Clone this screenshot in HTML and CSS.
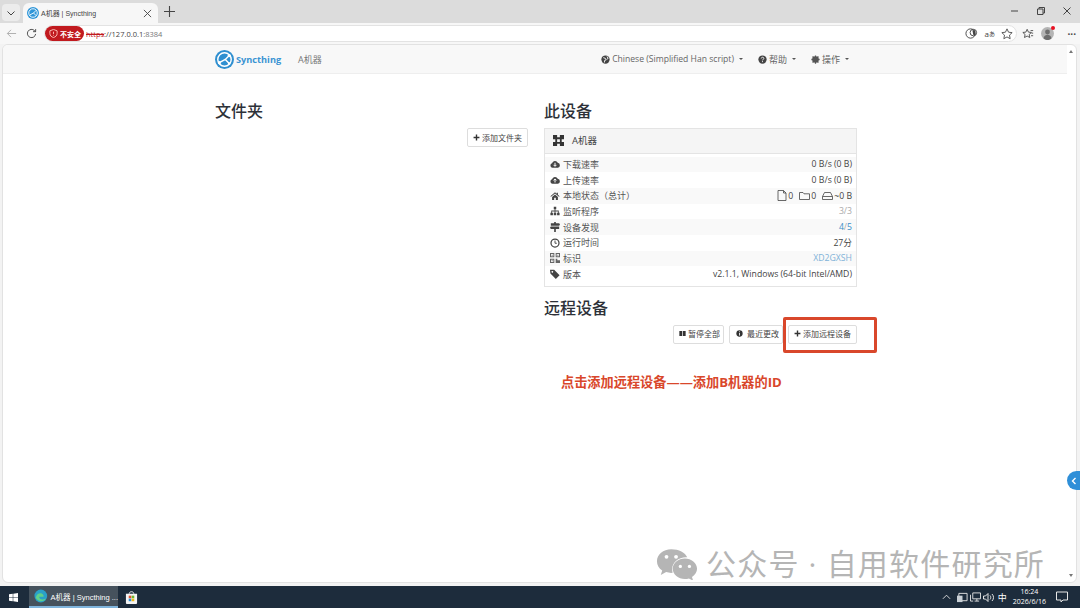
FILE: index.html
```html
<!DOCTYPE html>
<html lang="zh-CN">

<head>
  <meta charset="utf-8">
  <title>A机器 | Syncthing</title>
  <link rel="stylesheet" href="styles.css">
</head>

<body>
  <div class="window">
    <div class="tabstrip">
      <div class="tab-menu">
        <svg width="10" height="10" viewBox="0 0 10 10"><path d="M1.5 3.5 5 7l3.5-3.5" class="line" /></svg>
      </div>
      <div class="tab">
        <svg class="tab-logo" width="12" height="12" viewBox="0 0 24 24">
          <circle cx="12" cy="12" r="12" fill="#2f96d8" />
          <circle cx="12" cy="12" r="8.500" class="logo-line" />
          <path d="M5.500 16 13 12l5-5M13 12l5 5" class="logo-line" />
        </svg>
        <span class="tab-title">A机器 | Syncthing</span>
        <svg width="9" height="9" viewBox="0 0 10 10"><path d="M1 1l8 8M9 1 1 9" class="line" /></svg>
      </div>
      <svg class="new-tab" width="11" height="11" viewBox="0 0 10 10"><path d="M5 0v10M0 5h10" class="line" /></svg>
      <div class="win-controls">
        <svg width="10" height="10" viewBox="0 0 10 10"><path d="M1 5h7" class="line" /></svg>
        <svg width="10" height="10" viewBox="0 0 10 10"><path d="M1.5 3h5.500v5.500h-5.500zM3 3V1.500h5.500V7H7" class="line" /></svg>
        <svg width="10" height="10" viewBox="0 0 10 10"><path d="M1.5 1.500l7 7M8.500 1.500l-7 7" class="line" /></svg>
      </div>
    </div>

    <div class="toolbar">
      <svg width="11" height="11" viewBox="0 0 12 12"><path d="M11 6H1.500M5.500 2 1.500 6l4 4" class="line faint" /></svg>
      <svg class="reload" width="11" height="11" viewBox="0 0 12 12"><path d="M10.500 6.500a4.500 4.500 0 1 1-1.300-3.700L10.500 4V1.200M10.500 4H7.700" class="line" /></svg>
      <div class="addressbar">
        <span class="not-secure">
          <svg width="9" height="9" viewBox="0 0 10 10"><path d="M5 .5 9 2v3c0 2.200-1.700 3.800-4 4.500C2.700 8.800 1 7.200 1 5V2zM5 3v2.500M5 6.500v.8" class="shield" /></svg>
          不安全
        </span>
        <span class="scheme">https</span><span class="host-mid">://127.0.0.1</span><span class="port">:8384</span>
        <div class="address-icons">
          <svg width="13" height="13" viewBox="0 0 14 14"><circle cx="6" cy="7" r="5" class="line" /><circle cx="9" cy="6" r="3.500" class="line" /><path d="M8 3.500h3v5H9z" fill="#444" /></svg>
          <span class="translate">a<small>あ</small></span>
          <svg width="12" height="12" viewBox="0 0 14 14"><path d="M7 1l1.800 3.900 4.200.5-3.100 2.900.8 4.200L7 10.400 3.300 12.500l.8-4.200L1 5.400l4.200-.5z" class="line" /></svg>
        </div>
      </div>
      <svg class="favs" width="12" height="12" viewBox="0 0 14 14"><path d="M6 1.500l1.500 3.300 3.500.4-2.600 2.400.7 3.500L6 9.400l-3.100 1.700.7-3.500L1 5.200l3.500-.4zM10 3h3M11 6h2M10.500 9H13" class="line" /></svg>
      <div class="avatar">
        <svg width="13" height="13" viewBox="0 0 13 13"><circle cx="6.500" cy="6.500" r="6.500" fill="#b4b4b4" /><circle cx="6.500" cy="5" r="2.400" fill="#6d6d6d" /><path d="M2.500 11.500c.5-5 7.500-5 8 0a6.500 6.500 0 0 1-8 0z" fill="#6d6d6d" /></svg>
        <span class="avatar-dot"></span>
      </div>
      <div class="more">···</div>
    </div>

    <div class="viewport">
      <div class="page">
        <nav class="navbar">
          <div class="container nav-row">
            <svg class="brand-logo" width="19" height="19" viewBox="0 0 24 24">
              <circle cx="12" cy="12" r="12" fill="#2f8fd0" />
              <circle cx="12" cy="12" r="8.500" class="logo-line" />
              <path d="M5.500 16 13 12l5-5M13 12l5 5" class="logo-line" />
              <circle cx="5.500" cy="16" r="2" fill="#fff" /><circle cx="18" cy="7" r="2" fill="#fff" /><circle cx="18" cy="17" r="1.600" fill="#fff" />
            </svg>
            <span class="brand-name">Syncthing</span>
            <span class="device-name">A机器</span>
            <div class="nav-right">
              <span class="nav-item lang">
                <svg class="fa" viewBox="0 0 12 12"><circle cx="6" cy="6" r="5.500" /><path d="M3 3.500l3 1 1 2-2 .5-.5 3M8 2l1.500 2.500L8 5.500" class="cut" /></svg>
                Chinese (Simplified Han script)<i class="caret"></i>
              </span>
              <span class="nav-item">
                <svg class="fa" viewBox="0 0 12 12"><circle cx="6" cy="6" r="5.500" /><path d="M4.300 4.700c0-2.200 3.500-2.200 3.500-.2 0 1.300-1.800 1.300-1.800 2.700M6 8.200v1.300" class="cut" /></svg>
                帮助<i class="caret"></i>
              </span>
              <span class="nav-item">
                <svg class="fa" viewBox="0 0 12 12"><circle cx="6" cy="6" r="3.200" fill="none" stroke="#555" stroke-width="2.400" /><path d="M6 .5v11M.5 6h11M2.100 2.100l7.800 7.800M9.900 2.100l-7.800 7.800" stroke="#555" stroke-width="1.700" /></svg>
                操作<i class="caret"></i>
              </span>
            </div>
          </div>
        </nav>

        <main class="container columns">
          <section class="col">
            <h1>文件夹</h1>
            <div class="btn-row">
              <span class="btn">
                <svg class="fa-sm" viewBox="0 0 10 10"><path d="M4 .8h2V4h3.200v2H6v3.200H4V6H.8V4H4z" /></svg>
                添加文件夹
              </span>
            </div>
          </section>

          <section class="col">
            <h1>此设备</h1>
            <div class="panel">
              <div class="panel-head">
                <svg width="11" height="11" viewBox="0 0 12 12"><path d="M0 0h4.500v2.500h3V0H12v4.500H9.500v3H12V12H7.500V9.500h-3V12H0V7.500h2.500v-3H0zM4.500 4.500v3h3v-3z" fill="#333" fill-rule="evenodd" /></svg>
                <span>A机器</span>
              </div>
              <div class="panel-body">
                <div class="row">
                  <span class="row-label"><svg class="fa" viewBox="0 0 12 12"><path d="M3 10.500a2.700 2.700 0 0 1-.5-5.300A3.600 3.600 0 0 1 9.300 4.600 3 3 0 0 1 9.500 10.500z" /><path d="M6 4.500v4M4.200 7 6 8.800 7.800 7" class="cut" /></svg>下载速率</span>
                  <span>0 B/s (0 B)</span>
                </div>
                <div class="row">
                  <span class="row-label"><svg class="fa" viewBox="0 0 12 12"><path d="M3 10.500a2.700 2.700 0 0 1-.5-5.300A3.600 3.600 0 0 1 9.300 4.600 3 3 0 0 1 9.500 10.500z" /><path d="M6 9V5M4.200 6.500 6 4.700l1.800 1.800" class="cut" /></svg>上传速率</span>
                  <span>0 B/s (0 B)</span>
                </div>
                <div class="row">
                  <span class="row-label"><svg class="fa" viewBox="0 0 12 12"><path d="M6 1.500.5 6.300l.7.700L6 3l4.800 4 .7-.7L9.500 4.600V2H8v1.300zM2.500 7.200 6 4.200l3.500 3v3.500H7V8H5v2.700H2.500z" /></svg>本地状态（总计）</span>
                  <span class="totals">
                    <svg class="outline" width="10" height="11" viewBox="0 0 10 11"><path d="M1 .5h5.500L9 3v7.500H1zM6.500.5V3H9" /></svg>0
                    <svg class="outline gap" width="11" height="10" viewBox="0 0 11 10"><path d="M.5 8.500v-7h3.500l1 1.300h5.500v5.700z" /></svg>0
                    <svg class="outline gap" width="11" height="10" viewBox="0 0 11 10"><path d="M2.500 1.500h6l2 4v3H.5v-3zM.5 5.500h10" /></svg>~0 B
                  </span>
                </div>
                <div class="row">
                  <span class="row-label"><svg class="fa" viewBox="0 0 12 12"><path d="M4.500 1h3v3H6.500v1.500h4V8h1v3h-3V8h1V6.500H6.500V8h1v3h-3V8h1V6.500h-3V8h1v3h-3V8h1V5.500h4V4h-1z" /></svg>监听程序</span>
                  <span class="muted">3/3</span>
                </div>
                <div class="row">
                  <span class="row-label"><svg class="fa" viewBox="0 0 12 12"><path d="M5 0h2v1.500h4l1 1.500-1 1.500H1v-3h4zM1 5.500h10v3H7V12H5V8.500H1l-1-1.500z" /></svg>设备发现</span>
                  <span><span class="link">4</span><span class="muted">/</span><span class="link">5</span></span>
                </div>
                <div class="row">
                  <span class="row-label"><svg class="fa" viewBox="0 0 12 12"><circle cx="6" cy="6" r="4.800" fill="none" stroke="#444" stroke-width="1.500" /><path d="M6 3v3.300h2.200" fill="none" stroke="#444" stroke-width="1.100" /></svg>运行时间</span>
                  <span>27分</span>
                </div>
                <div class="row">
                  <span class="row-label"><svg class="fa" viewBox="0 0 12 12"><path d="M0 0h5.200v5.200H0zM6.800 0H12v5.200H6.800zM0 6.800h5.200V12H0zM6.800 6.800h2v2H12V12H6.800zM1.200 1.200v2.800H4V1.200zM8 1.200v2.800h2.800V1.200zM1.200 8v2.800H4V8zM2 2h1.200v1.200H2zM8.800 2H10v1.200H8.800zM2 8.800h1.200V10H2z" fill="#666" fill-rule="evenodd" /></svg>标识</span>
                  <span class="link pale">XD2GXSH</span>
                </div>
                <div class="row">
                  <span class="row-label"><svg class="fa" viewBox="0 0 12 12"><path d="M0 1h5l6.500 6.500L7 12 .5 5.500zM2.800 2.300a1 1 0 1 0 .01 0z" fill-rule="evenodd" /></svg>版本</span>
                  <span>v2.1.1, Windows (64-bit Intel/AMD)</span>
                </div>
              </div>
            </div>

            <h1 class="remote-title">远程设备</h1>
            <div class="btn-row">
              <span class="btn tight">
                <svg class="fa-sm" viewBox="0 0 10 10"><path d="M.5 1.500h4v7h-4zM5.500 1.500h4v7h-4z" /></svg>
                暂停全部
              </span>
              <span class="btn tight wide-gap">
                <svg class="fa-sm" viewBox="0 0 10 10"><circle cx="5" cy="5" r="4.500" /><path d="M5 2v1.200M5 4.300V8" class="cut" /></svg>
                最近更改
              </span>
              <span class="btn">
                <svg class="fa-sm" viewBox="0 0 10 10"><path d="M4 .8h2V4h3.200v2H6v3.200H4V6H.8V4H4z" /></svg>
                添加远程设备
              </span>
            </div>
          </section>
        </main>
      </div>

      <div class="scrollbar">
        <i class="arrow-up"></i>
        <i class="arrow-down"></i>
      </div>

      <div class="highlight"></div>
      <div class="note">点击添加远程设备——添加B机器的ID</div>
      <div class="watermark">
        <svg width="42" height="32" viewBox="0 0 44 33">
          <path d="M16 1C7.500 1 1 6.500 1 13.500c0 4 2 7.300 5.500 9.700L5 28l5.600-3c1.700.5 3.500.8 5.400.8.500 0 1 0 1.500-.1-.4-1.200-.6-2.500-.6-3.700 0-7 6.500-12.500 14.600-12.500h1.200C30.700 4.500 24 1 16 1z" fill="#b5b5b5" />
          <path d="M43 21.500c0-6-6-10.800-12.800-10.800S17.500 15.500 17.500 21.500s6 10.800 12.700 10.800c1.500 0 3-.2 4.300-.6l4.400 2.300-1.200-3.900c3.300-2.200 5.300-5.300 5.300-8.600z" fill="#b5b5b5" />
          <circle cx="11" cy="9" r="2" fill="#fff" /><circle cx="21" cy="9" r="2" fill="#fff" />
          <circle cx="25.500" cy="19" r="1.700" fill="#fff" /><circle cx="35" cy="19" r="1.700" fill="#fff" />
        </svg>
        <span>公众号 · 自用软件研究所</span>
      </div>
    </div>

    <div class="side-tab"><svg width="6" height="8" viewBox="0 0 6 8"><path d="M4.500 1 1.500 4l3 3" fill="none" stroke="#fff" stroke-width="1.400" /></svg></div>

    <footer class="taskbar">
      <svg class="start" width="9" height="9" viewBox="0 0 12 12"><path d="M0 1.700 5 1v4.700H0zM5.700.9 12 0v5.700H5.700zM0 6.400h5v4.700l-5-.7zM5.700 6.400H12V12l-6.300-.9z" fill="#fff" /></svg>
      <div class="task-item">
        <svg width="14" height="14" viewBox="0 0 16 16">
          <circle cx="8" cy="8" r="7.500" fill="#2aa0c8" />
          <path d="M2 10c1-5 5-6 7-5s3 3 2 4H6c0 3 4 4 8 2-2 4-8 5-12-1z" fill="#5fd08a" />
        </svg>
        <span>A机器 | Syncthing ...</span>
      </div>
      <div class="store-icon">
        <svg width="13" height="13" viewBox="0 0 14 14">
          <path d="M1 3h12v10a1 1 0 0 1-1 1H2a1 1 0 0 1-1-1z" fill="#f4f4f4" />
          <path d="M4.500 3c0-3 5-3 5 0" fill="none" stroke="#f4f4f4" />
          <path d="M4 5h2.800v2.800H4z" fill="#e2522f" /><path d="M7.200 5H10v2.800H7.200z" fill="#6fb82f" /><path d="M4 8.200h2.800V11H4z" fill="#2a8fd8" /><path d="M7.200 8.200H10V11H7.200z" fill="#f2b90f" />
        </svg>
      </div>
      <div class="tray">
        <svg class="tray-up" width="9" height="6" viewBox="0 0 10 6"><path d="M1 5l4-4 4 4" class="tray-line" /></svg>
        <svg width="11" height="11" viewBox="0 0 12 12"><path d="M2 1.500h9v8H2z" class="tray-line" /><path d="M0 4h6v7H0z" fill="#c9d0d6" /></svg>
        <svg width="11" height="10" viewBox="0 0 12 11"><path d="M3 1h8.500v6.500H3zM5 10h5M7.500 7.500V10M.5 3v7h3" class="tray-line" /></svg>
        <svg width="12" height="11" viewBox="0 0 12 11"><path d="M.5 4v3h2l2.500 2.500v-8L2.500 4zM7 3.500c1 1 1 3 0 4M9 2c2 2 2 5 0 7" class="tray-line" /></svg>
        <span class="ime">中</span>
        <div class="clock"><span>16:24</span><span>2026/6/16</span></div>
        <svg class="notify" width="12" height="12" viewBox="0 0 12 12"><path d="M.5 1h11v8H7L5 11V9H.5z" class="tray-line" /></svg>
      </div>
    </footer>
  </div>
</body>

</html>
```

FILE: styles.css
```css
* {
  box-sizing: border-box;
}

html,
body {
  margin: 0;
  height: 100%;
  overflow: hidden;
}

body {
  font-family: "Open Sans", "Noto Sans CJK SC", sans-serif;
  font-size: 9px;
  color: #444;
  background: #f3f3f3;
}

.window {
  position: relative;
  display: flex;
  flex-direction: column;
  height: 608px;
}

.line {
  fill: none;
  stroke: #444;
  stroke-width: 1;
}

.line.faint {
  stroke: #aaa;
}

.logo-line {
  fill: none;
  stroke: #fff;
  stroke-width: 1.800;
}

/* browser chrome */
.tabstrip {
  display: flex;
  align-items: flex-end;
  height: 23px;
  padding-left: 2px;
  background: #dcdcdc;
}

.tab-menu {
  display: flex;
  align-items: center;
  justify-content: center;
  width: 18px;
  height: 17px;
  margin: 0 3px 2px 0;
  border-radius: 4px;
  background: #ececec;
}

.tab {
  display: flex;
  align-items: center;
  width: 135px;
  height: 20px;
  padding: 0 6px 0 4px;
  border-radius: 6px 6px 0 0;
  background: #f7f7f7;
}

.tab-logo {
  margin-right: 2px;
}

.tab-title {
  flex: 1;
  font-family: "Liberation Sans", "Noto Sans CJK SC", sans-serif;
  font-size: 7px;
}

.new-tab {
  margin: 0 0 6px 6px;
}

.win-controls {
  display: flex;
  gap: 16px;
  margin: 0 8px 7px auto;
}

.toolbar {
  display: flex;
  align-items: center;
  height: 21px;
  padding: 0 4px 0 6px;
  background: #f7f7f7;
}

.reload {
  margin-left: 9px;
}

.addressbar {
  display: flex;
  align-items: center;
  flex: 1;
  height: 17px;
  margin: 0 5px 0 7px;
  border: 1px solid #e3e3e3;
  border-radius: 9px;
  background: #fff;
  font-size: 7.500px;
  color: #444;
}

.not-secure {
  display: flex;
  align-items: center;
  gap: 2px;
  height: 15px;
  padding: 0 3px 0 4px;
  margin-right: 2px;
  border-radius: 8px;
  background: #c11a1f;
  color: #fff;
  font-size: 7px;
  font-weight: 700;
}

.shield {
  fill: none;
  stroke: #ffc9c0;
  stroke-width: 1;
}

.scheme {
  color: #c11a1f;
  text-decoration: line-through;
}

.port {
  color: #777;
}

.address-icons {
  display: flex;
  align-items: center;
  gap: 6px;
  margin: 0 3px 0 auto;
}

.translate {
  display: flex;
  align-items: flex-end;
  width: 11px;
  font-size: 8px;
  line-height: 10px;
}

.translate small {
  font-size: 6px;
}

.favs {
  margin-right: 7px;
}

.avatar {
  position: relative;
  display: flex;
  width: 13px;
  height: 13px;
  margin-right: 13px;
}

.avatar-dot {
  position: absolute;
  top: -1px;
  right: -1px;
  width: 4px;
  height: 4px;
  border-radius: 50%;
  background: #e81123;
}

.more {
  font-size: 10px;
  font-weight: 700;
  line-height: 1;
}

/* page area */
.viewport {
  position: relative;
  display: flex;
  flex: 1;
  min-height: 0;
  margin: 0 3px 3px 2px;
  border: 1px solid #e2e2e2;
  border-radius: 6px;
  background: #fff;
  overflow: hidden;
}

.page {
  flex: 1;
  min-width: 0;
}

.scrollbar {
  display: flex;
  flex-direction: column;
  justify-content: space-between;
  width: 9px;
  padding: 5px 0 5px 2px;
}

.arrow-up,
.arrow-down {
  width: 0;
  height: 0;
  border-left: 2.500px solid transparent;
  border-right: 2.500px solid transparent;
}

.arrow-up {
  border-bottom: 3px solid #777;
}

.arrow-down {
  border-top: 3px solid #777;
}

.container {
  width: 642px;
  margin-left: 212px;
}

.navbar {
  height: 29px;
  border-bottom: 1px solid #eee;
  background: #f8f8f8;
}

.nav-row {
  display: flex;
  align-items: center;
  height: 100%;
}

.brand-logo {
  margin-right: 2px;
}

.brand-name {
  margin-right: 17px;
  color: #3a94d3;
  font-size: 9.200px;
  font-weight: 700;
}

.device-name {
  color: #777;
}

.nav-right {
  display: flex;
  gap: 15px;
  margin-left: auto;
  margin-right: 8px;
  color: #666;
}

.nav-item {
  display: flex;
  align-items: center;
}

.nav-item.lang {
  font-size: 8.600px;
}

.caret {
  width: 0;
  height: 0;
  margin-left: 5px;
  border-left: 2px solid transparent;
  border-right: 2px solid transparent;
  border-top: 2px solid #555;
}

.fa {
  flex: none;
  width: 9px;
  height: 9px;
  margin-right: 2px;
  fill: #444;
}

.fa-sm {
  flex: none;
  width: 7px;
  height: 7px;
  fill: #333;
}

.cut {
  fill: none;
  stroke: #fff;
  stroke-width: 1.200;
}

.columns {
  display: grid;
  grid-template-columns: 313px 313px;
  column-gap: 16px;
}

h1 {
  margin: 27px 0 6px;
  color: #2d3138;
  font-size: 16px;
  font-weight: 500;
  line-height: 21px;
}

.remote-title {
  margin-top: 11px;
}

.btn-row {
  display: flex;
  justify-content: flex-end;
  gap: 5px;
}

.btn {
  display: flex;
  align-items: center;
  gap: 2px;
  height: 19px;
  padding: 0 5px 1px;
  border: 1px solid #ddd;
  border-radius: 2px;
  background: #fff;
  color: #444;
  font-size: 8px;
}

.btn.tight {
  padding-right: 3px;
}

.btn.wide-gap {
  gap: 4px;
  padding-left: 6px;
}

.panel {
  border: 1px solid #e4e4e4;
}

.panel-head {
  display: flex;
  align-items: center;
  gap: 8px;
  height: 25px;
  padding: 0 0 2px 8px;
  border-bottom: 1px solid #e4e4e4;
  background: #f5f5f5;
  color: #444;
  font-size: 9.500px;
}

.panel-body {
  padding: 2.500px 0 3.500px;
}

.row {
  display: flex;
  align-items: center;
  justify-content: space-between;
  height: 15.700px;
  padding: 0 4px 0 5px;
  font-size: 8.700px;
}

.row:nth-child(odd) {
  background: #f9f9f9;
}

.row-label {
  display: flex;
  align-items: center;
  gap: 3px;
  color: #555;
  font-size: 9px;
}

.row-label .fa {
  width: 10px;
  height: 10px;
  margin-right: 0;
}

.totals {
  display: flex;
  align-items: center;
  gap: 1px;
}

.outline {
  fill: none;
  stroke: #444;
  stroke-width: .8;
}

.outline.gap {
  margin-left: 5px;
}

.muted {
  color: #aaa;
}

.link {
  color: #3a8ec8;
}

.link.pale {
  color: #7fb2d8;
}

/* annotations laid over the screenshot */
.highlight {
  position: absolute;
  left: 780px;
  top: 272px;
  width: 94px;
  height: 36px;
  border: 3px solid #d9472b;
  border-radius: 2px;
}

.note {
  position: absolute;
  left: 558px;
  top: 328px;
  color: #d9472b;
  font-size: 13.200px;
  font-weight: 700;
  line-height: 18px;
  white-space: nowrap;
}

.side-tab {
  position: absolute;
  right: 0;
  top: 471px;
  display: flex;
  align-items: center;
  justify-content: center;
  width: 13px;
  height: 19px;
  border-radius: 10px 0 0 10px;
  background: #2f8fd8;
}

.watermark {
  position: absolute;
  left: 653px;
  top: 500px;
  display: flex;
  align-items: center;
  gap: 8px;
  color: #b5b5b5;
  font-size: 30px;
  line-height: 38px;
  letter-spacing: 1.200px;
  white-space: nowrap;
}

/* windows taskbar */
.taskbar {
  display: flex;
  align-items: center;
  height: 22px;
  background: #1d2c3c;
  color: #fff;
}

.start {
  margin: 0 11px 0 9px;
}

.task-item {
  display: flex;
  align-items: center;
  gap: 3px;
  width: 89px;
  height: 100%;
  padding-left: 5px;
  border-bottom: 2px solid #7fb4dc;
  background: #46525d;
  font-family: "Liberation Sans", "Noto Sans CJK SC", sans-serif;
  font-size: 7.500px;
  white-space: nowrap;
}

.store-icon {
  display: flex;
  margin-left: 7px;
}

.tray {
  display: flex;
  align-items: center;
  gap: 2px;
  margin-left: auto;
  padding-right: 12px;
}

.tray-up {
  margin-right: 4px;
}

.ime {
  margin-left: 1px;
  font-size: 9px;
}

.tray-line {
  fill: none;
  stroke: #e6e6e6;
  stroke-width: 1;
}

.clock {
  display: flex;
  flex-direction: column;
  align-items: center;
  margin-left: 4px;
  font-size: 7px;
  line-height: 10px;
}

.notify {
  margin-left: 8px;
}
```
